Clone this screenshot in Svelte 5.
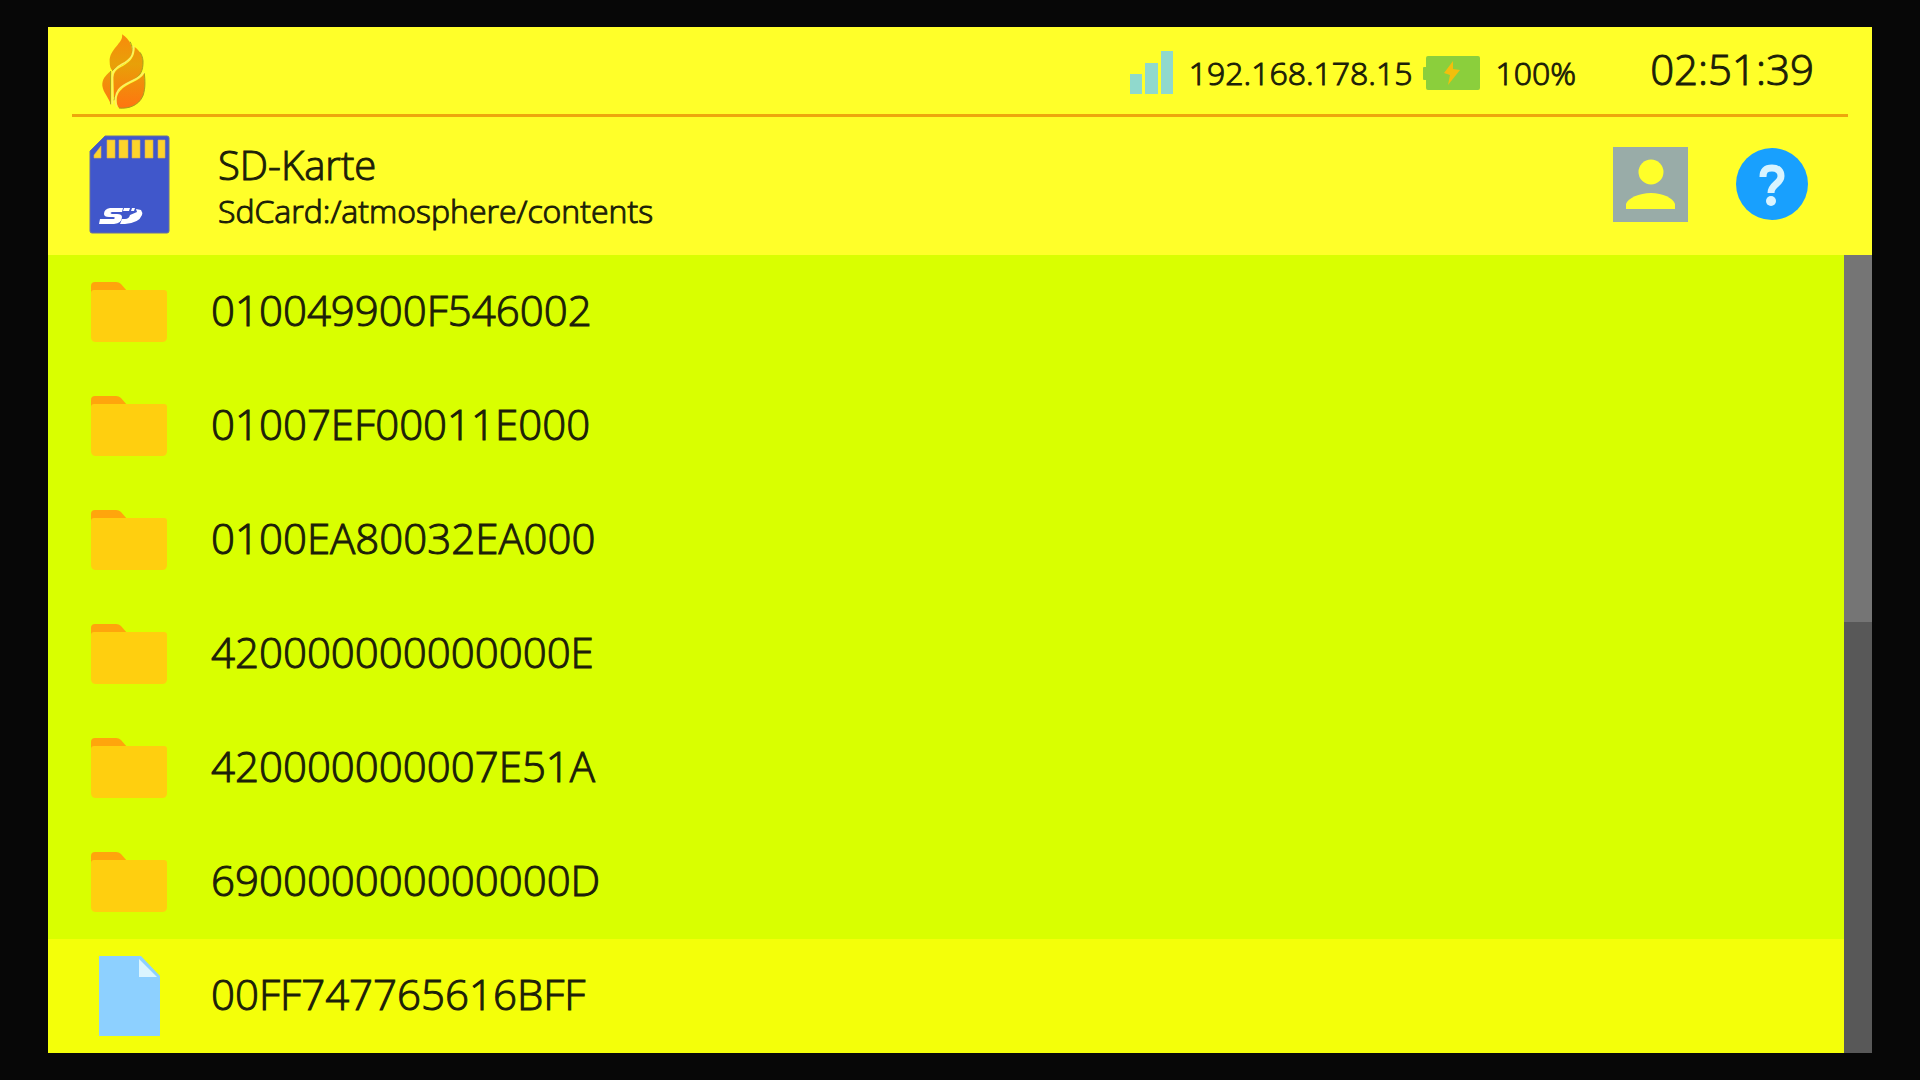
<script>
    const status = { ip: '192.168.178.15', battery: '100%', time: '02:51:39' };
    const location = { name: 'SD-Karte', path: 'SdCard:/atmosphere/contents' };

    const entries = [
        { name: '010049900F546002', type: 'folder' },
        { name: '01007EF00011E000', type: 'folder' },
        { name: '0100EA80032EA000', type: 'folder' },
        { name: '420000000000000E', type: 'folder' },
        { name: '420000000007E51A', type: 'folder' },
        { name: '690000000000000D', type: 'folder' },
        { name: '00FF747765616BFF', type: 'file' }
    ];
</script>

<svelte:head>
    <title>{location.name}</title>
</svelte:head>

<main class="screen">
    <header>
        <div class="topbar">
            <svg class="logo" viewBox="180 36 141 228" aria-hidden="true">
                <defs>
                    <linearGradient id="flame" x1="0" y1="40" x2="0" y2="262" gradientUnits="userSpaceOnUse">
                        <stop offset="0" stop-color="#f98a0c" />
                        <stop offset="0.4" stop-color="#e8a008" />
                        <stop offset="1" stop-color="#ff7410" />
                    </linearGradient>
                </defs>
                <g fill="url(#flame)">
                    <path d="M246 40C252 66 207 84 209 122C209 135 212 143 217 149C232 134 266 128 275 102C280 78 270 56 246 40Z" />
                    <path d="M284 78C285 106 272 122 250 134C230 144 219 152 220 176L222 238C228 205 255 188 280 176C300 166 310 150 309 120C306 100 298 88 284 78Z" />
                    <path d="M313 157C300 181 262 185 240 210C226 226 228 250 237 261C262 264 295 256 309 224C317 200 315 178 313 157Z" />
                    <path d="M212 150C195 165 186 175 187 194C190 216 205 226 212 250Z" />
                </g>
                <g fill="none" stroke="#a99f1a" stroke-width="3">
                    <path d="M217 149C232 134 266 128 275 102C280 88 276 72 270 62" />
                    <path d="M222 238C228 205 255 188 280 176C300 166 310 150 309 120C308 108 304 100 300 94" />
                    <path d="M237 261C262 264 295 256 309 224C317 200 315 178 313 157" />
                    <path d="M212 150V250" />
                </g>
                <g fill="none" stroke="#fdf060" stroke-width="5">
                    <path d="M280 74C283 106 268 118 246 130C228 140 216 150 217 170V250" />
                    <path d="M311 154C298 178 256 182 236 206C226 220 224 240 230 258" />
                </g>
            </svg>
            <div class="status">
                <svg class="signal" viewBox="0 0 43 43" fill="#90d9cd" aria-hidden="true">
                    <path d="M0 23h12v20H0zM15 12h13v31H15zM31 0h12v43H31z" />
                </svg>
                <span class="ip">{status.ip}</span>
                <svg class="battery" viewBox="0 0 57 34" aria-hidden="true">
                    <path fill="#8bcf3c" d="M5 0H55Q57 0 57 2V32Q57 34 55 34H5Q3 34 3 32V24H1Q0 24 0 23V12Q0 11 1 11H3V2Q3 0 5 0Z" />
                    <path fill="#f3bf0c" d="M30 5L21 17L27 19L25 29L37 14L30 13Z" />
                </svg>
                <span>{status.battery}</span>
            </div>
            <time>{status.time}</time>
        </div>

        <div class="location">
            <svg class="sdcard" viewBox="0 0 81 99" aria-hidden="true">
                <path fill="#4057cb" stroke="#6b719b" d="M16 1H78Q80 1 80 3V96Q80 98 78 98H3Q1 98 1 96V16Z" />
                <path fill="#fdd42b" stroke="#d7a75f" stroke-width="0.6" d="M5 23V20L12 11V23zM18 5h8v18h-8zM30 5h9v18h-9zM43 5h8v18h-8zM56 5h8v18h-8zM69 5h7v18h-7z" />
                <g fill="#fff">
                    <path d="M34 73H21Q15 74 15 79Q15 82 20 82H24Q27 82 25 84H11L10 89H25Q33 88 33 82Q33 79 28 79H23Q20 78 23 77H33Z" />
                    <path d="M35 73H41L40 76H34ZM43 73H46L45 76H42ZM47 74L52 75Q54 78 53 80Q50 88 36 89H31L33 84H36Q40 84 41 80L48 77Z" />
                </g>
            </svg>
            <div class="titles">
                <h1>{location.name}</h1>
                <p>{location.path}</p>
            </div>
            <button class="user" aria-label="Benutzer">
                <svg viewBox="0 0 75 75" aria-hidden="true">
                    <path fill="#99aca8" d="M0 0H75V75H0Z" />
                    <circle cx="38" cy="25" r="12.5" fill="#ffff29" />
                    <path fill="#ffff29" d="M13 62V57C15 51 26 46 38 46S60 51 62 57V62Z" />
                </svg>
            </button>
            <button class="help" aria-label="Hilfe">
                <svg viewBox="0 0 72 72" aria-hidden="true">
                    <circle cx="36" cy="36" r="36" fill="#18a0fe" />
                    <path fill="none" stroke="#d9f4ff" stroke-width="7" d="M27 29C27 22 30 20 36 20S45 23 45 28C45 36 35 36 35 45" />
                    <circle cx="35" cy="53" r="5" fill="#d9f4ff" />
                </svg>
            </button>
        </div>
    </header>

    <div class="browser">
        <ul>
            {#each entries as entry}
                <li>
                    <button class="entry" class:file={entry.type === 'file'}>
                        <svg class="icon" viewBox="0 0 80 80" aria-hidden="true">
                            {#if entry.type === 'folder'}
                                <path fill="#ffa50c" d="M2 30V14Q2 10 6 10H27Q30 10 32 12L38 19V30Z" />
                                <path fill="#ffcf0f" d="M5 18H75Q78 18 78 21V65Q78 70 73 70H7Q2 70 2 65V21Q2 18 5 18Z" />
                            {:else}
                                <path fill="#8dd0ff" d="M10 0H52L71 20V80H10Z" />
                                <path fill="#dbf5ff" d="M50 3V21H68Z" />
                            {/if}
                        </svg>
                        <span>{entry.name}</span>
                    </button>
                </li>
            {/each}
        </ul>
        <div class="scrollbar"><div class="thumb"></div></div>
    </div>
</main>

<style>
    :global(body) {
        background: #070707;
    }

    .screen {
        margin: 27px 48px;
        background: #ffff29;
        color: #1c2008;
        font-family: "Open Sans", "Noto Sans", sans-serif;
        font-size: 32px;
        font-weight: 300;
        line-height: 40px;
        -webkit-text-stroke: 1px #1c2008;
    }

    .topbar {
        display: flex;
        align-items: center;
        height: 87px;
        margin: 0 24px;
        padding: 0 34px 0 28px;
        border-bottom: 3px solid #eea60c;
    }

    .logo {
        width: 47px;
        height: 76px;
    }

    .status {
        display: flex;
        align-items: center;
        margin-left: auto;
        padding-top: 4px;
    }

    .signal {
        width: 43px;
        height: 43px;
    }

    .ip {
        margin: 0 10px 0 16px;
    }

    .battery {
        width: 57px;
        height: 34px;
        margin-right: 16px;
    }

    time {
        margin-left: 74px;
        padding-bottom: 4px;
        font-size: 42px;
        line-height: 48px;
    }

    .location {
        display: flex;
        align-items: center;
        height: 134px;
        padding: 0 64px 4px 41px;
    }

    .sdcard {
        width: 81px;
        height: 99px;
    }

    .titles {
        flex: 1;
        margin-left: 48px;
        padding-top: 2px;
    }

    h1,
    p {
        margin: 0;
        font-weight: inherit;
    }

    h1 {
        font-size: 40px;
        line-height: 52px;
    }

    button {
        display: block;
        padding: 0;
        border: none;
        background: none;
        color: inherit;
        font: inherit;
        cursor: pointer;
    }

    .user,
    .user svg {
        display: block;
        width: 75px;
        height: 75px;
    }

    .help,
    .help svg {
        display: block;
        width: 72px;
        height: 72px;
    }

    .help {
        margin-left: 48px;
    }

    .browser {
        display: flex;
    }

    ul {
        flex: 1;
        margin: 0;
        padding: 0;
        list-style: none;
    }

    .entry {
        display: flex;
        align-items: center;
        gap: 42px;
        width: 100%;
        height: 114px;
        padding-left: 41px;
        background: #d9ff00;
        font-size: 42px;
        line-height: 48px;
        text-align: left;
    }

    .entry span {
        padding-bottom: 4px;
    }

    .entry.file {
        background: #f4ff09;
    }

    .icon {
        width: 80px;
        height: 80px;
    }

    .scrollbar {
        width: 28px;
        background: #585858;
    }

    .thumb {
        height: 46%;
        background: #757575;
    }
</style>
